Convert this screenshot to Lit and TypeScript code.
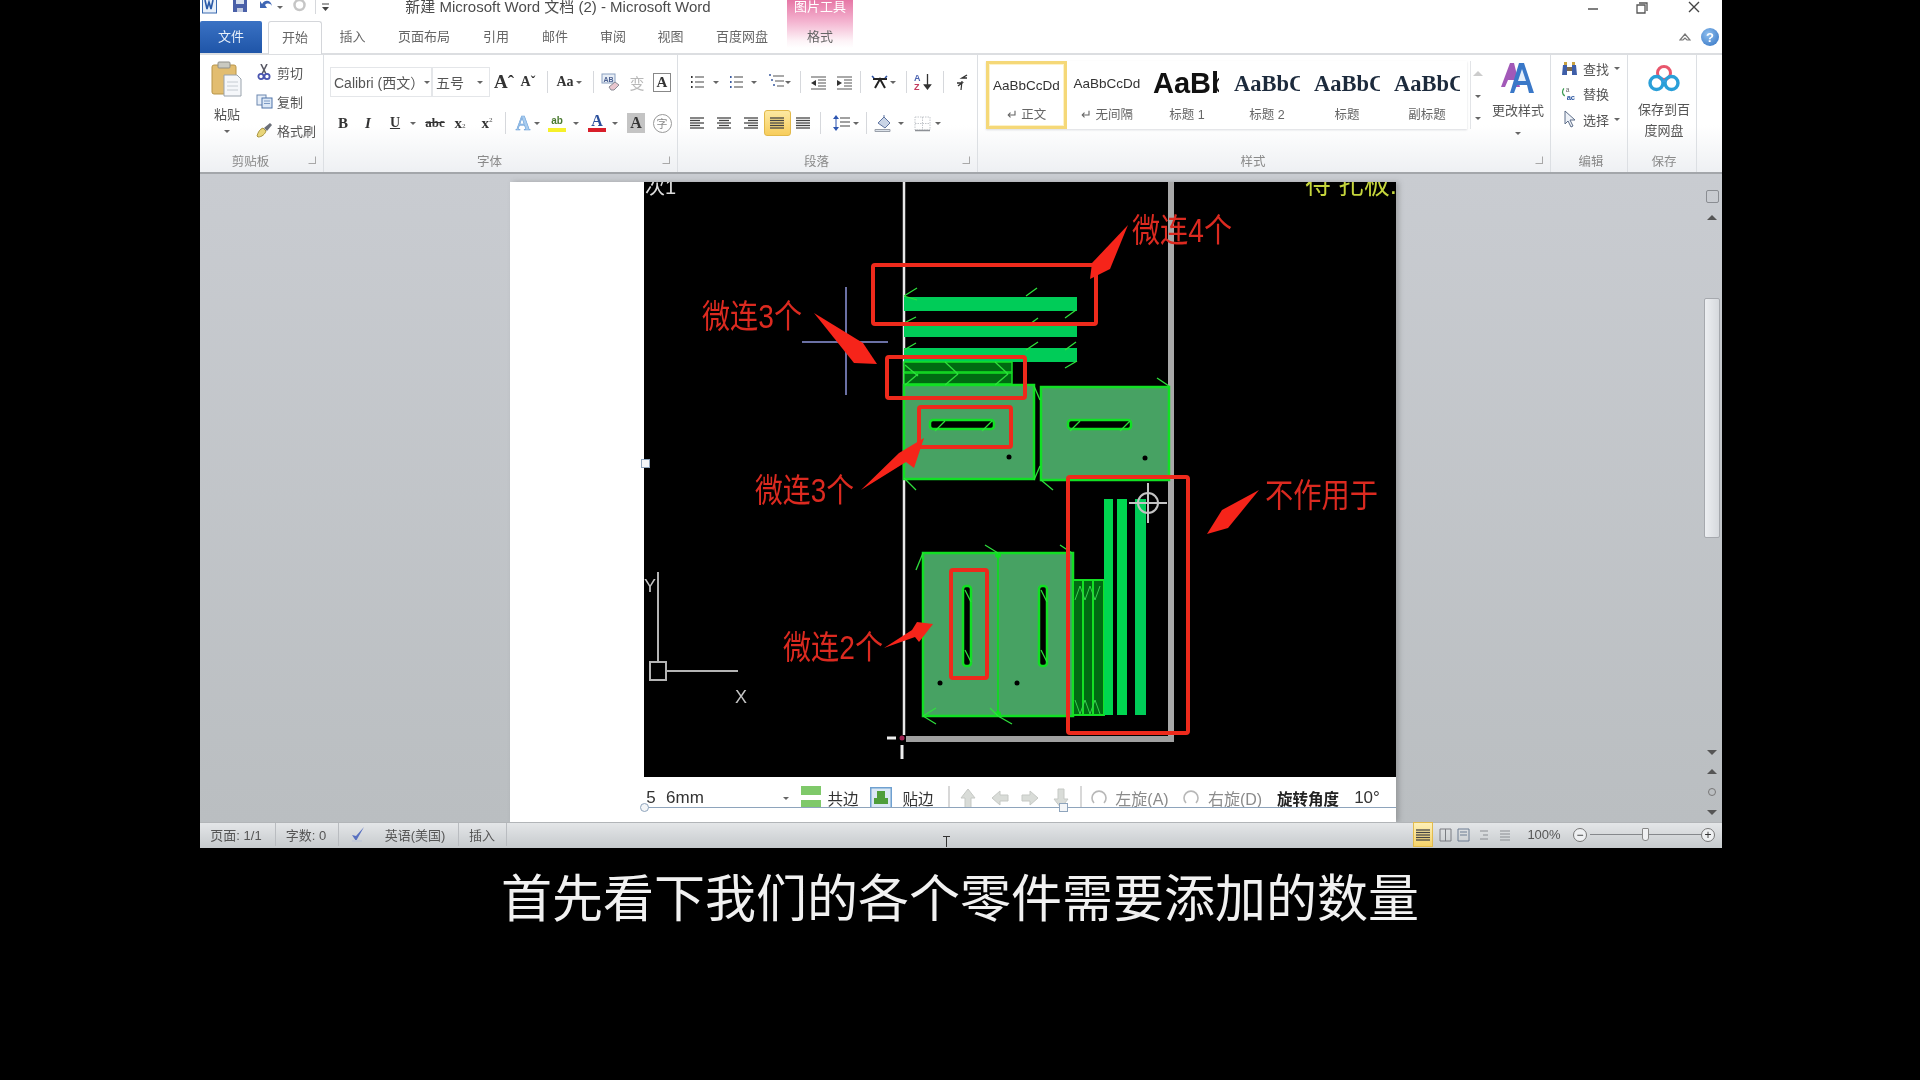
import { LitElement, html, css, svg, TemplateResult } from "lit";
import { customElement } from "lit/decorators.js";

type Cell = [number, TemplateResult | string, number?];

// place fixed-width cells so each one is centred on its x, from a row starting at origin
const row = (origin: number, items: Cell[]) => {
  let prev = origin;
  return items.map(([c, content, w = 20]) => {
    const ml = c - w / 2 - prev;
    prev = c + w / 2;
    return html`<span class="cell" style="margin-left:${ml}px;width:${w}px">${content}</span>`;
  });
};

const arr = html`<i class="arr"></i>`;
const sep = html`<i class="sep"></i>`;

const lines = (kind: string) => {
  const rows: Record<string, number[][]> = {
    left: [[1, 15], [1, 11], [1, 15], [1, 11], [1, 15]],
    center: [[1, 15], [3, 13], [1, 15], [3, 13], [1, 15]],
    right: [[1, 15], [5, 15], [1, 15], [5, 15], [1, 15]],
    just: [[1, 15], [1, 15], [1, 15], [1, 15], [1, 15]],
  };
  return html`<svg width="16" height="14" viewBox="0 0 16 14">
    ${rows[kind].map(
      ([a, b], i) => svg`<path d="M${a} ${2 + i * 2.5}H${b}" stroke="#444" stroke-width="1.3" />`
    )}
  </svg>`;
};

const bullets = (color = "#333") => html`<svg width="16" height="16" viewBox="0 0 16 16">
  <path d="M6 3H15M6 8H15M6 13H15" stroke="#444" stroke-width="1.2" />
  <path d="M2 3h1.6M2 8h1.6M2 13h1.6" stroke=${color} stroke-width="2" />
</svg>`;

const icons = {
  paste: html`<svg width="32" height="36" viewBox="0 0 32 36">
    <rect x="1" y="4" width="24" height="29" rx="2" fill="#e2bd70" stroke="#b89548" />
    <rect x="7" y="1" width="12" height="6" rx="1" fill="#c9c9c0" stroke="#8f8f88" />
    <path d="M13 14h13l4 4v17H13z" fill="#f5f7fa" stroke="#9aa3ad" />
    <path d="M16 21h11M16 25h11M16 29h11" stroke="#c6ccd2" />
  </svg>`,
  cut: html`<svg width="14" height="16" viewBox="0 0 14 16">
    <path d="M4 0l5 10M10 0L5 10" stroke="#5a5a66" stroke-width="1.6" />
    <circle cx="4" cy="12.5" r="2.6" fill="none" stroke="#4a55b0" stroke-width="1.8" />
    <circle cx="10" cy="12.5" r="2.6" fill="none" stroke="#4a55b0" stroke-width="1.8" />
  </svg>`,
  copy: html`<svg width="17" height="15" viewBox="0 0 17 15">
    <rect x="1" y="1" width="9" height="10" fill="#e6eef8" stroke="#6d88b0" />
    <rect x="6" y="4" width="10" height="10" fill="#dce8f6" stroke="#4e73a8" />
    <path d="M8 7h6M8 9.5h6" stroke="#7c9ac4" />
  </svg>`,
  brush: html`<svg width="18" height="17" viewBox="0 0 18 17">
    <path d="M2 14c1-4 3-7 6-8l3 3c-1 3-4 6-8 6z" fill="#e8d57a" stroke="#a89540" />
    <path d="M9 6l6-5 2 2-5 6z" fill="#6b6f78" />
  </svg>`,
  clear: html`<svg width="20" height="18" viewBox="0 0 20 18">
    <rect x="2" y="1" width="13" height="9" fill="#e8eef6" stroke="#8aa0c0" />
    <text x="3.5" y="8.5" font-size="7" font-weight="700" fill="#4a5f90" font-family="Liberation Sans">AB</text>
    <path d="M9 14l6-5 4 3-5 5H11z" fill="#e9c7cf" stroke="#8a8a94" />
  </svg>`,
  sort: html`<svg width="20" height="18" viewBox="0 0 20 18">
    <text x="1" y="8" font-size="9" font-weight="700" fill="#4a62b0" font-family="Liberation Sans">A</text>
    <text x="1" y="17" font-size="9" font-weight="700" fill="#c23a5e" font-family="Liberation Sans">Z</text>
    <path d="M14.5 1v14M11.5 12l3 4 3-4z" stroke="#333" fill="#333" stroke-width="1.3" />
  </svg>`,
  pilcrow: html`<svg width="16" height="18" viewBox="0 0 16 18">
    <path d="M13 2L8 5h5M3 10h5L4 13" fill="none" stroke="#333" stroke-width="1.4" />
    <path d="M8 8l-1 9" stroke="#333" stroke-width="1.2" />
  </svg>`,
  indentL: html`<svg width="17" height="15" viewBox="0 0 17 15">
    <path d="M1 2h15M8 5h8M8 8h8M8 11h8M1 14h15" stroke="#555" stroke-width="1.2" />
    <path d="M6 5v6L1 8z" fill="#333" />
  </svg>`,
  indentR: html`<svg width="17" height="15" viewBox="0 0 17 15">
    <path d="M1 2h15M8 5h8M8 8h8M8 11h8M1 14h15" stroke="#555" stroke-width="1.2" />
    <path d="M1 5v6l5-3z" fill="#333" />
  </svg>`,
  asian: html`<svg width="18" height="14" viewBox="0 0 18 14">
    <path d="M4 13L9 4l5 9M2 4h14" fill="none" stroke="#222" stroke-width="2" />
    <path d="M1 1l2 2M16 1l-2 2" stroke="#2a4fa0" stroke-width="1.6" />
  </svg>`,
  multi: html`<svg width="18" height="18" viewBox="0 0 18 18">
    <path d="M5 3h11M7 8h9M9 13h7" stroke="#555" stroke-width="1.2" />
    <path d="M1 2h2M3 7h2M5 12h2" stroke="#3a5aa0" stroke-width="1.6" />
  </svg>`,
  lineSp: html`<svg width="18" height="18" viewBox="0 0 18 18">
    <path d="M7 4h10M7 8h10M7 12h10" stroke="#444" stroke-width="1.2" />
    <path d="M3 1l3 4H0zM3 17l3-4H0z" fill="#2c55b0" />
    <path d="M3 5v8" stroke="#2c55b0" />
  </svg>`,
  bucket: html`<svg width="20" height="19" viewBox="0 0 20 19">
    <path d="M4 9l6-6 6 6-5 5z" fill="#c9d4e6" stroke="#5f74a0" />
    <path d="M10 3V1" stroke="#5f74a0" />
    <path d="M1 15.5h15v2H1z" fill="#dce2ea" stroke="#9aa0aa" />
  </svg>`,
  border: html`<svg width="17" height="17" viewBox="0 0 17 17">
    <path d="M1 2h15v13H1zM8.5 2v13M1 8.5h15" fill="none" stroke="#c3c6cb" stroke-dasharray="1.5 1" />
    <path d="M1 15.5h15" stroke="#8d9096" stroke-width="1.5" />
  </svg>`,
  find: html`<svg width="17" height="15" viewBox="0 0 17 15">
    <path d="M2 4h4v10H1zM11 4h4l1 10h-5z" fill="#3e5ea8" />
    <path d="M6 6h5v4H6z" fill="#7e6b4c" />
    <path d="M3 1h3v3H3zM11 1h3v3h-3z" fill="#c9a240" />
  </svg>`,
  replace: html`<svg width="18" height="17" viewBox="0 0 18 17">
    <path d="M3 3c-2 3-2 6 1 8" fill="none" stroke="#3a9a50" stroke-width="1.4" />
    <text x="5" y="7" font-size="7" fill="#666" font-family="Liberation Sans">a</text>
    <text x="6" y="15" font-size="8" font-weight="700" fill="#2a55a0" font-family="Liberation Sans">ac</text>
  </svg>`,
  select: html`<svg width="14" height="18" viewBox="0 0 14 18">
    <path d="M2 1v13l3-3 3 6 2-1-3-6h5z" fill="#eef2f8" stroke="#5d6d88" />
  </svg>`,
  change: html`<svg width="36" height="34" viewBox="0 0 36 34">
    <path d="M1 26L10 2h4l6 24h-4l-2-7H8l-3 7z" fill="#a259b8" />
    <path d="M10 32L19 2h5l10 30h-5l-2-8H17l-3 8z" fill="#3a78c8" />
    <path d="M18 20h8l-4-12z" fill="#e4eefa" />
  </svg>`,
  baidu: html`<svg width="32" height="28" viewBox="0 0 32 28">
    <circle cx="16" cy="9" r="6.5" fill="none" stroke="#e8566c" stroke-width="3" />
    <circle cx="8.5" cy="19" r="6.5" fill="none" stroke="#2a9fd8" stroke-width="3.4" />
    <circle cx="23.5" cy="19" r="6.5" fill="none" stroke="#2a9fd8" stroke-width="3.4" />
    <path d="M16 15l-3 3h6z" fill="#3aa0e0" />
  </svg>`,
  check: html`<svg width="18" height="18" viewBox="0 0 18 18">
    <path d="M3 9l4 6 8-14-8 9z" fill="#5870c0" />
    <path d="M3 15h10" stroke="#c4cad6" stroke-width="2" />
  </svg>`,
};

@customElement("cad-figure")
export class CadFigure extends LitElement {
  static styles = css`
    :host {
      display: block;
    }
    svg {
      display: block;
    }
    text {
      font-family: "Liberation Sans", "Noto Sans CJK SC", sans-serif;
    }
  `;

  private ticks = [
    [904, 296, 917, 288], [904, 296, 917, 300], [1026, 296, 1037, 288], [1065, 318, 1076, 310],
    [904, 323, 916, 317], [1030, 324, 1038, 318], [904, 350, 916, 343], [1026, 350, 1038, 342],
    [1065, 350, 1076, 342], [1065, 368, 1077, 361], [905, 365, 918, 376], [945, 362, 958, 374],
    [995, 362, 1008, 374], [905, 385, 918, 374], [945, 385, 958, 374], [995, 385, 1008, 374],
    [1034, 386, 1040, 400], [1157, 378, 1169, 386], [1034, 480, 1040, 466], [1041, 480, 1053, 490],
    [904, 478, 916, 490], [935, 431, 945, 421], [982, 431, 992, 421], [1070, 431, 1080, 421],
    [1120, 431, 1130, 421], [923, 553, 916, 570], [985, 545, 998, 553], [1060, 545, 1072, 553],
    [923, 716, 936, 708], [923, 716, 936, 724], [998, 716, 1012, 724], [998, 716, 990, 708],
    [965, 590, 971, 602], [965, 650, 971, 662], [1041, 590, 1047, 602], [1041, 650, 1047, 662],
  ];

  private redBox(x: number, y: number, w: number, h: number) {
    return svg`<rect x=${x} y=${y} width=${w} height=${h} rx="2" fill="none" stroke="#ee2a1c" stroke-width="4" />`;
  }

  private label(s: string, x: number, y: number, len: number) {
    return svg`<text x=${x} y=${y} font-size="33" fill="#dc2a20" textLength=${len} lengthAdjust="spacingAndGlyphs">${s}</text>`;
  }

  private plate(x: number, y: number, w: number, h: number) {
    return svg`<rect x=${x} y=${y} width=${w} height=${h} fill="#47a263" stroke="#12e024" stroke-width="2.5" />`;
  }

  private slot(x: number, y: number, w: number, h: number) {
    return svg`<rect x=${x} y=${y} width=${w} height=${h} rx="3" fill="#000" stroke="#12e024" stroke-width="2.5" />`;
  }

  render() {
    return html`<svg width="752" height="595" viewBox="644 182 752 595">
      <rect x="644" y="182" width="752" height="595" fill="#000" />

      <text x="645" y="194" font-size="20" fill="#dcdcdc">次1</text>
      <text x="1305" y="194" font-size="27" fill="#c6d63c" textLength="92" lengthAdjust="spacingAndGlyphs">待 扎板:</text>

      <!-- sheet edges -->
      <path d="M904 182V735" stroke="#e8e8e8" stroke-width="2.5" />
      <path d="M1171 182V742" stroke="#a8a8a8" stroke-width="6" />
      <path d="M906 739H1174" stroke="#a0a0a0" stroke-width="6" />

      <!-- cursor crosshair -->
      <path d="M846 287V395M802 342H888" stroke="#6a70a4" stroke-width="2" />

      <!-- strip parts -->
      <rect x="904" y="297" width="173" height="14" fill="#00cc58" />
      <rect x="904" y="325" width="173" height="12" fill="#00cc58" />
      <rect x="904" y="348" width="173" height="14" fill="#00cc58" />
      <rect x="904" y="362" width="108" height="10" fill="#006b12" stroke="#14e024" stroke-width="1.5" />
      <rect x="904" y="373" width="108" height="11" fill="#006b12" stroke="#14e024" stroke-width="1.5" />

      ${this.plate(904, 385, 130, 94)}
      ${this.plate(1041, 387, 128, 93)}
      ${this.slot(930, 420, 64, 9)}
      ${this.slot(1068, 420, 63, 9)}
      <circle cx="1009" cy="457" r="2.5" fill="#000" />
      <circle cx="1145" cy="458" r="2.5" fill="#000" />

      ${this.plate(923, 553, 150, 163)}
      <path d="M998 553V716" stroke="#16d42a" stroke-width="2" />
      <circle cx="998" cy="555" r="3" fill="#12e024" />
      <circle cx="998" cy="714" r="3" fill="#12e024" />
      ${this.slot(963, 586, 8, 80)}
      ${this.slot(1039, 586, 8, 80)}
      <circle cx="940" cy="683" r="2.5" fill="#000" />
      <circle cx="1017" cy="683" r="2.5" fill="#000" />

      <!-- upright strips -->
      <rect x="1073" y="580" width="31" height="135" fill="#006b12" stroke="#14e024" stroke-width="2" />
      <path d="M1083 580V715M1093 580V715" stroke="#14e024" stroke-width="2" />
      <path d="M1075 600l5-14 5 14 5-14 5 14 5-14M1075 700l5 14 5-14 5 14 5-14 5 14" fill="none" stroke="#38d050" />
      <rect x="1104" y="499" width="9" height="216" fill="#00d650" />
      <rect x="1117" y="499" width="10" height="216" fill="#00d650" />
      <rect x="1135" y="499" width="11" height="216" fill="#00cc58" />

      <g stroke="#2ee03c" stroke-width="1.3">
        ${this.ticks.map(([a, b, c, d]) => svg`<line x1=${a} y1=${b} x2=${c} y2=${d} />`)}
      </g>

      <!-- red markup -->
      ${this.redBox(873, 265, 223, 59)}
      ${this.redBox(887, 357, 138, 41)}
      ${this.redBox(919, 407, 92, 40)}
      ${this.redBox(951, 570, 36, 108)}
      ${this.redBox(1068, 477, 120, 256)}
      <g fill="#f6241a">
        <polygon points="1128,225 1110,269 1090,279 1092,263" />
        <polygon points="814,313 863,343 877,364 854,363" />
        <polygon points="861,490 899,453 924,438 914,468 906,462" />
        <polygon points="1259,490 1228,528 1207,534 1222,510" />
        <polygon points="884,648 912,630 917,622 933,624 919,642 915,637" />
      </g>
      ${this.label("微连4个", 1132, 242, 100)}
      ${this.label("微连3个", 702, 328, 100)}
      ${this.label("微连3个", 755, 502, 99)}
      ${this.label("微连2个", 783, 659, 100)}
      ${this.label("不作用于", 1265, 507, 113)}

      <!-- ucs icon -->
      <path d="M658 572V662M666 671H738" stroke="#b4b4b4" stroke-width="2" />
      <rect x="650" y="662" width="16" height="18" fill="none" stroke="#b4b4b4" stroke-width="2" />
      <text x="644" y="592" font-size="18" fill="#c4c4c4">Y</text>
      <text x="735" y="703" font-size="18" fill="#c4c4c4">X</text>

      <!-- snap target -->
      <g stroke="#c4c4c4" fill="none" stroke-width="2">
        <circle cx="1148" cy="503" r="10" />
        <path d="M1148 483V523M1129 503H1167" />
      </g>

      <!-- origin marker -->
      <path d="M887 738H896M902 745V759" stroke="#eee" stroke-width="3" />
      <circle cx="902" cy="738" r="2.5" fill="#a02050" />
    </svg>`;
  }
}

@customElement("app-root")
export class AppRoot extends LitElement {
  static styles = css`
    :host {
      display: block;
      width: 1920px;
      height: 1080px;
      background: #000;
      overflow: hidden;
      font-family: "Liberation Sans", "Noto Sans CJK SC", sans-serif;
    }

    .window {
      width: 1522px;
      height: 848px;
      margin-left: 200px;
      display: flex;
      flex-direction: column;
      background: #fff;
      overflow: hidden;
      filter: blur(0.6px);
      color: #555;
      font-size: 13px;
    }

    .cell {
      display: inline-flex;
      align-items: center;
      justify-content: center;
      flex: none;
      height: 100%;
      white-space: nowrap;
    }

    .arr {
      width: 0;
      height: 0;
      border-left: 3px solid transparent;
      border-right: 3px solid transparent;
      border-top: 3px solid #666;
    }

    .sep {
      width: 1px;
      height: 22px;
      background: #d6d8dc;
    }

    /* title bar */
    .title {
      height: 21px;
      display: flex;
      position: relative;
      flex: none;
    }

    .title .cell {
      height: 14px;
    }

    .title-text {
      font-size: 15px;
      color: #4c4c4c;
      line-height: 12px;
    }

    .tool-tab {
      position: absolute;
      left: 587px;
      top: 0;
      width: 66px;
      height: 48px;
      background: linear-gradient(#e677a6, #f4b4d0 45%, #fdf3f7 85%, #fff);
      color: #fff;
      text-align: center;
      font-size: 13px;
      line-height: 14px;
    }

    .win-btns {
      display: flex;
      height: 14px;
      position: absolute;
      left: 0;
      top: 0;
      right: 0;
    }

    /* tabs */
    .tabs {
      height: 32px;
      display: flex;
      flex: none;
      position: relative;
      align-items: stretch;
    }

    .tab {
      display: flex;
      align-items: center;
      justify-content: center;
      flex: none;
      color: #666;
      font-size: 13px;
      position: relative;
      padding-bottom: 3px;
      box-sizing: border-box;
    }

    .tab.file {
      background: linear-gradient(#3a72c4, #1f55a8);
      color: #e8f0fa;
      border-radius: 2px 2px 0 0;
      margin-right: 6px;
    }

    .tab.active {
      border: 1px solid #d4d6da;
      border-bottom: 0;
      border-radius: 3px 3px 0 0;
      background: #fff;
      margin-bottom: -1px;
    }

    .tab-right {
      position: absolute;
      right: 0;
      top: 0;
      bottom: 0;
      left: 0;
      display: flex;
      align-items: center;
      pointer-events: none;
    }

    .help {
      width: 18px;
      height: 18px;
      border-radius: 50%;
      background: radial-gradient(circle at 40% 35%, #8fc0f0, #2f6fc0);
      color: #fff;
      font-weight: 700;
      font-size: 13px;
      display: flex;
      align-items: center;
      justify-content: center;
    }

    /* ribbon */
    .ribbon {
      height: 121px;
      flex: none;
      display: flex;
      border-top: 2px solid #dcdee1;
      border-bottom: 2px solid #a3a6aa;
      background: linear-gradient(#fff 60%, #eef0f3);
      box-sizing: border-box;
    }

    .group {
      display: flex;
      flex-direction: column;
      flex: none;
      border-right: 1px solid #dcdfe3;
      box-sizing: border-box;
    }

    .g-clip { width: 124px; }
    .g-font { width: 354px; }
    .g-para { width: 300px; }
    .g-style { width: 573px; }
    .g-edit { width: 77px; }
    .g-save { width: 69px; }

    .g-body {
      flex: 1;
      min-height: 0;
    }

    .g-foot {
      height: 24px;
      flex: none;
      display: flex;
      align-items: center;
      color: #8a8a8a;
      font-size: 12.5px;
    }

    .g-edit .g-foot,
    .g-save .g-foot {
      padding-left: 4px;
    }

    .g-foot span {
      flex: 1;
      text-align: center;
    }

    .ext {
      width: 22px;
      display: flex;
      justify-content: center;
    }

    .ext b {
      width: 6px;
      height: 6px;
      border: 1px solid #a8a8a8;
      border-top-color: transparent;
      border-left-color: transparent;
    }

    .clip-body {
      display: flex;
    }

    .paste {
      width: 54px;
      padding-top: 6px;
      display: flex;
      flex-direction: column;
      align-items: center;
      gap: 7px;
      flex: none;
    }

    .clip-rows {
      padding-top: 5px;
      display: flex;
      flex-direction: column;
      gap: 5px;
    }

    .clip-row {
      display: flex;
      align-items: center;
      height: 24px;
      gap: 3px;
    }

    .clip-row .ico {
      width: 20px;
      display: flex;
      justify-content: center;
    }

    .tool-rows {
      padding-top: 12px;
      display: flex;
      flex-direction: column;
      gap: 13px;
    }

    .tool-row {
      display: flex;
      height: 30px;
      color: #333;
    }

    .tool-row.low {
      height: 26px;
    }

    .combo {
      border: 1px solid #e4e6e9;
      box-sizing: border-box;
      width: 100%;
      height: 100%;
      display: flex;
      align-items: center;
      justify-content: space-between;
      padding: 0 6px 0 3px;
      font-size: 14px;
      color: #555;
    }

    .serif {
      font-family: "Liberation Serif", "Noto Sans CJK SC", serif;
      font-weight: 700;
      color: #333;
    }

    .big { font-size: 19px; }
    .mid { font-size: 14px; }

    .boxed {
      border: 1px solid #888;
      padding: 0 3px;
      font-size: 15px;
      line-height: 17px;
    }

    .strike { text-decoration: line-through; }
    .under { text-decoration: underline; }
    .ital { font-style: italic; }

    .script {
      font-size: 7px;
      color: #777;
    }

    .a-glow {
      color: #a9cdf0;
      -webkit-text-stroke: 0.6px #6fa2d8;
      font-size: 20px;
    }

    .a-mark {
      display: inline-flex;
      flex-direction: column;
      align-items: center;
      line-height: 14px;
    }

    .a-mark i {
      width: 18px;
      height: 4px;
    }

    .shade {
      background: #c4c4c4;
      padding: 0 3px;
      font-size: 16px;
      line-height: 20px;
    }

    .circled {
      width: 17px;
      height: 17px;
      border: 1px solid #999;
      border-radius: 50%;
      font-size: 11px;
      color: #888;
      display: flex;
      align-items: center;
      justify-content: center;
    }

    .hl {
      width: 27px;
      height: 26px;
      background: linear-gradient(#fde9a2, #f7cd5c);
      border: 1px solid #e2b94a;
      border-radius: 3px;
      box-sizing: border-box;
      display: flex;
      align-items: center;
      justify-content: center;
    }

    .style-body {
      display: flex;
    }

    .gallery {
      margin: 6px 0 0 8px;
      height: 68px;
      display: flex;
      background: #fff;
      box-shadow: 0 1px 2px #d9dbdf;
      flex: none;
    }

    .sty {
      width: 80px;
      height: 68px;
      box-sizing: border-box;
      display: flex;
      flex-direction: column;
      align-items: center;
      overflow: hidden;
      color: #666;
      flex: none;
    }

    .sty.on {
      width: 81px;
      border: 3px solid #f5d878;
      box-shadow: inset 0 0 0 1px #fdf2c8;
    }

    .sty .pv {
      height: 43px;
      display: flex;
      align-items: center;
      justify-content: center;
      width: 72px;
      overflow: hidden;
      white-space: nowrap;
      color: #333;
      font-size: 13.5px;
      box-sizing: border-box;
      padding-top: 2px;
    }

    .sty.on .pv {
      height: 40px;
    }

    .sty .pv.h1 {
      justify-content: flex-start;
      align-self: flex-start;
      margin-left: 6px;
      width: 66px;
      font-size: 29px;
      font-weight: 700;
      color: #111;
    }

    .sty .pv.h2 {
      justify-content: flex-start;
      align-self: flex-start;
      margin-left: 7px;
      width: 66px;
      font-family: "Liberation Serif", serif;
      font-size: 22.5px;
      font-weight: 700;
      color: #1c2a3c;
    }

    .sty .nm {
      font-size: 12.5px;
    }

    .g-scroll {
      width: 15px;
      height: 68px;
      margin: 6px 0 0 3px;
      border-left: 1px solid #e2e4e7;
      display: flex;
      flex-direction: column;
      align-items: center;
      justify-content: space-around;
      box-sizing: border-box;
      flex: none;
    }

    .change {
      width: 66px;
      flex: none;
      display: flex;
      flex-direction: column;
      align-items: center;
      padding-top: 6px;
      gap: 5px;
      color: #555;
    }

    .change .arr {
      margin-top: 8px;
    }

    .edit-rows {
      padding: 1px 0 0 10px;
      display: flex;
      flex-direction: column;
      gap: 1.5px;
    }

    .edit-row {
      display: flex;
      align-items: center;
      height: 24px;
      gap: 5px;
    }

    .edit-row .ico {
      width: 17px;
      display: flex;
      justify-content: center;
    }

    .save-body {
      display: flex;
      flex-direction: column;
      align-items: center;
      padding: 9px 0 0 4px;
      line-height: 21px;
      text-align: center;
      color: #555;
    }

    .save-body svg {
      margin-bottom: 7px;
    }

    /* document */
    .doc {
      flex: 1;
      min-height: 0;
      display: flex;
      padding-top: 8px;
      overflow: hidden;
      background: linear-gradient(#c9ccd1, #babec1);
    }

    .page {
      margin-left: 310px;
      width: 886px;
      height: 640px;
      display: flex;
      background: #fff;
      box-shadow: 3px 0 5px rgba(90, 90, 90, 0.35);
      flex: none;
    }

    .page-margin {
      width: 134px;
      flex: none;
    }

    .pic {
      width: 752px;
      position: relative;
      flex: none;
    }

    .cad-tools {
      height: 31px;
      display: flex;
      border-bottom: 1px solid #8ea4bc;
      box-sizing: border-box;
      overflow: hidden;
      color: #333;
      font-size: 17px;
      align-items: stretch;
    }

    .cad-tools .cell {
      padding-top: 12px;
      box-sizing: border-box;
    }

    .off {
      color: #8b8b8b;
    }

    .strong {
      font-weight: 700;
      color: #222;
    }

    .vsep {
      width: 2px;
      height: 24px;
      background: #d8d8d8;
    }

    .handle {
      position: absolute;
      top: 621px;
      width: 7px;
      height: 7px;
      background: #f4f6f8;
      border: 1px solid #8ea4bc;
    }

    .handle.round {
      border-radius: 50%;
      left: -4px;
    }

    .handle.mid {
      left: 415px;
    }

    .handle.side {
      left: -3px;
      top: 277px;
    }

    .v-scroll {
      width: 18px;
      margin: 0 1px 0 auto;
      display: flex;
      flex-direction: column;
      align-items: center;
      flex: none;
      color: #666;
      padding-top: 2px;
    }

    .thumb {
      width: 16px;
      height: 240px;
      margin-top: 78px;
      background: linear-gradient(90deg, #eceef1, #d6d9dd);
      border: 1px solid #a6a9ae;
      border-radius: 2px;
      box-sizing: border-box;
      flex: none;
    }

    .up {
      width: 0;
      height: 0;
      border-left: 5px solid transparent;
      border-right: 5px solid transparent;
      border-bottom: 5px solid #555;
    }

    .down {
      width: 0;
      height: 0;
      border-left: 5px solid transparent;
      border-right: 5px solid transparent;
      border-top: 5px solid #555;
    }

    .ruler {
      width: 13px;
      height: 13px;
      border: 1px solid #8a8d92;
      border-radius: 2px;
      box-sizing: border-box;
      margin-bottom: 12px;
      margin-top: 6px;
    }

    .v-scroll .s-down {
      margin-top: 212px;
    }

    .v-scroll .s-next {
      margin-top: 14px;
    }

    .dot {
      width: 8px;
      height: 8px;
      border: 1px solid #777;
      border-radius: 50%;
      box-sizing: border-box;
    }

    /* status bar */
    .status {
      height: 26px;
      flex: none;
      display: flex;
      border-top: 1px solid #b2b5b8;
      background: linear-gradient(#e4e6e8, #c6cacd);
      box-sizing: border-box;
      color: #555;
      font-size: 13px;
      position: relative;
      padding-bottom: 2px;
    }

    .status .sep {
      height: 100%;
      background: #b9bcc0;
    }

    .view-on {
      width: 20px;
      height: 25px;
      background: linear-gradient(#fdf0b8, #f6d36a);
      border: 1px solid #e2bb4c;
      box-sizing: border-box;
      display: flex;
      align-items: center;
      justify-content: center;
    }

    .zbtn {
      width: 14px;
      height: 14px;
      border: 1px solid #777;
      border-radius: 50%;
      box-sizing: border-box;
      background: #eef0f2;
      display: flex;
      align-items: center;
      justify-content: center;
      line-height: 10px;
      font-size: 12px;
      color: #333;
    }

    .zline {
      width: 111px;
      height: 1px;
      background: #85888c;
      display: flex;
      align-items: center;
      justify-content: center;
    }

    .zline b {
      width: 7px;
      height: 13px;
      background: #f0f1f3;
      border: 1px solid #888;
      box-sizing: border-box;
      border-radius: 1px 1px 3px 3px;
    }

    .ibeam {
      width: 7px;
      height: 11px;
      margin-top: 14px;
      border-top: 1px solid #333;
      display: flex;
      justify-content: center;
      box-sizing: border-box;
    }

    .ibeam::after {
      content: "";
      width: 1px;
      background: #333;
    }

    .subtitle {
      height: 232px;
      padding-top: 18px;
      box-sizing: border-box;
      text-align: center;
      color: #f1f1f1;
      font-family: "Noto Sans CJK SC", sans-serif;
      font-size: 51px;
      line-height: 58px;
    }
  `;

  private tabs = [
    { t: "开始", w: 53 + 1, cls: "active" },
    { t: "插入", w: 61 },
    { t: "页面布局", w: 82 },
    { t: "引用", w: 62 },
    { t: "邮件", w: 56 },
    { t: "审阅", w: 60 },
    { t: "视图", w: 55 },
    { t: "百度网盘", w: 88 },
    { t: "", w: 1 },
    { t: "格式", w: 66 },
  ];

  private styles_ = [
    { pv: "AaBbCcDd", nm: "↵ 正文", cls: "on", k: "" },
    { pv: "AaBbCcDd", nm: "↵ 无间隔", cls: "", k: "" },
    { pv: "AaBbC", nm: "标题 1", cls: "", k: "h1" },
    { pv: "AaBbCc", nm: "标题 2", cls: "", k: "h2" },
    { pv: "AaBbCc", nm: "标题", cls: "", k: "h2" },
    { pv: "AaBbCc", nm: "副标题", cls: "", k: "h2" },
  ];

  private group(cls: string, label: string, ext: boolean, body: TemplateResult) {
    return html`<div class="group ${cls}">
      <div class="g-body">${body}</div>
      <div class="g-foot">
        <span>${label}</span>
        ${ext ? html`<div class="ext"><b></b></div>` : ""}
      </div>
    </div>`;
  }

  private titleBar() {
    return html`<div class="title">
      ${row(0, [
        [9, html`<svg width="15" height="14" viewBox="0 0 15 14">
            <rect x=".5" y="-3" width="14" height="16" fill="#e8f0fa" stroke="#3a6ab0" />
            <path d="M3 0l2 9 2-7 2 7 2-9" fill="none" stroke="#2a5aa8" stroke-width="1.6" />
          </svg>`],
        [40, html`<svg width="14" height="14" viewBox="0 0 14 14">
            <path d="M0-2h14v14H0z" fill="#4a60a8" />
            <path d="M3-2h8v6H3z" fill="#d8e0ee" />
            <path d="M4 8h6v4H4z" fill="#c4cce0" />
          </svg>`],
        [66, html`<svg width="15" height="14" viewBox="0 0 15 14">
            <path d="M3 4c3-5 9-4 10 2-2-3-5-3-7-1l2 3H1V1z" fill="#3f66b4" />
          </svg>`],
        [80, arr, 8],
        [99, html`<svg width="13" height="14" viewBox="0 0 13 14">
            <circle cx="6.5" cy="5" r="5" fill="none" stroke="#c6c6c6" stroke-width="2.5" />
          </svg>`],
        [115, html`<i class="sep" style="height:14px"></i>`, 2],
        [125, html`<svg width="9" height="10" viewBox="0 0 9 10">
            <path d="M1 2h7" stroke="#444" />
            <path d="M1 5h7L4.500 9z" fill="#444" />
          </svg>`],
        [358, html`<span class="title-text">新建 Microsoft Word 文档 (2) - Microsoft Word</span>`, 310],
      ])}
      <div class="tool-tab">图片工具</div>
      <div class="win-btns">
        ${row(0, [
          [1393, html`<svg width="12" height="14"><path d="M1 9h10" stroke="#555" stroke-width="1.5" /></svg>`],
          [1442, html`<svg width="12" height="14" viewBox="0 0 12 14">
              <path d="M3 3h8v8M1 5h8v8H1z" fill="none" stroke="#555" stroke-width="1.3" />
            </svg>`],
          [1494, html`<svg width="12" height="14" viewBox="0 0 12 14">
              <path d="M1 2l10 10M11 2L1 12" stroke="#444" stroke-width="1.4" />
            </svg>`],
        ])}
      </div>
    </div>`;
  }

  private tabBar() {
    return html`<div class="tabs">
      <div class="tab file" style="width:62px">文件</div>
      ${this.tabs.map(
        (t) => html`<div class="tab ${t.cls ?? ""}" style="width:${t.w}px">${t.t}</div>`
      )}
      <div class="tab-right">
        ${row(0, [
          [1485, html`<svg width="12" height="10" viewBox="0 0 12 10">
              <path d="M1 8l5-6 5 6-3 0-2-2-2 2z" fill="none" stroke="#777" stroke-width="1.2" />
            </svg>`],
          [1510, html`<span class="help">?</span>`],
        ])}
      </div>
    </div>`;
  }

  private clipboard() {
    return this.group(
      "g-clip",
      "剪贴板",
      true,
      html`<div class="clip-body">
        <div class="paste">${icons.paste}<span>粘贴</span>${arr}</div>
        <div class="clip-rows">
          <div class="clip-row"><span class="ico">${icons.cut}</span>剪切</div>
          <div class="clip-row"><span class="ico">${icons.copy}</span>复制</div>
          <div class="clip-row"><span class="ico">${icons.brush}</span>格式刷</div>
        </div>
      </div>`
    );
  }

  private fontGroup() {
    return this.group(
      "g-font",
      "字体",
      true,
      html`<div class="tool-rows">
        <div class="tool-row">
          ${row(324, [
            [381, html`<span class="combo">Calibri (西文）${arr}</span>`, 102],
            [461, html`<span class="combo">五号${arr}</span>`, 58],
            [504, html`<span class="serif big">Aˆ</span>`],
            [528, html`<span class="serif mid">Aˇ</span>`],
            [547, sep, 2],
            [565, html`<span class="serif mid">Aa</span>`],
            [579, arr, 8],
            [593, sep, 2],
            [610, icons.clear],
            [637, html`<span style="color:#b8b8b8;font-size:15px">变</span>`],
            [662, html`<span class="serif boxed">A</span>`],
          ])}
        </div>
        <div class="tool-row low">
          ${row(324, [
            [343, html`<span class="serif big" style="font-size:15px">B</span>`],
            [368, html`<span class="serif ital" style="font-size:15px">I</span>`],
            [395, html`<span class="serif under" style="font-size:14px">U</span>`],
            [413, arr, 8],
            [435, html`<span class="serif strike">abc</span>`],
            [460, html`<span class="serif" style="font-size:15px">x<span class="script">2</span></span>`],
            [487, html`<span class="serif" style="font-size:15px">x<span class="script" style="vertical-align:6px">2</span></span>`],
            [505, sep, 2],
            [523, html`<span class="serif a-glow">A</span>`],
            [537, arr, 8],
            [557, html`<span class="a-mark">
                <span style="font-size:10px;color:#4a7a30;font-weight:700">ab</span>
                <i style="background:#f6f02a"></i>
              </span>`],
            [576, arr, 8],
            [597, html`<span class="a-mark">
                <span class="serif" style="font-size:16px;color:#2a4f9c">A</span>
                <i style="background:#d81e2a"></i>
              </span>`],
            [615, arr, 8],
            [636, html`<span class="serif shade">A</span>`],
            [662, html`<span class="circled">字</span>`],
          ])}
        </div>
      </div>`
    );
  }

  private paragraph() {
    return this.group(
      "g-para",
      "段落",
      true,
      html`<div class="tool-rows">
        <div class="tool-row">
          ${row(678, [
            [697, bullets()],
            [716, arr, 8],
            [736, bullets("#3a5aa0")],
            [754, arr, 8],
            [777, icons.multi],
            [788, arr, 6],
            [800, sep, 2],
            [818, icons.indentL],
            [844, icons.indentR],
            [860, sep, 2],
            [880, icons.asian],
            [893, arr, 8],
            [906, sep, 2],
            [923, icons.sort],
            [943, sep, 2],
            [962, icons.pilcrow],
          ])}
        </div>
        <div class="tool-row low">
          ${row(678, [
            [697, lines("left")],
            [724, lines("center")],
            [751, lines("right")],
            [777, html`<span class="hl">${lines("just")}</span>`, 27],
            [803, lines("just")],
            [820, sep, 2],
            [842, icons.lineSp],
            [856, arr, 6],
            [866, sep, 2],
            [884, icons.bucket],
            [901, arr, 8],
            [922, icons.border],
            [938, arr, 8],
          ])}
        </div>
      </div>`
    );
  }

  private stylesGroup() {
    return this.group(
      "g-style",
      "样式",
      true,
      html`<div class="style-body">
        <div class="gallery">
          ${this.styles_.map(
            (s) => html`<div class="sty ${s.cls}">
              <div class="pv ${s.k}">${s.pv}</div>
              <div class="nm">${s.nm}</div>
            </div>`
          )}
        </div>
        <div class="g-scroll"><i class="up" style="border-bottom-color:#ccc"></i>${arr}${arr}</div>
        <div class="change">${icons.change}<span>更改样式</span>${arr}</div>
      </div>`
    );
  }

  private editing() {
    return this.group(
      "g-edit",
      "编辑",
      false,
      html`<div class="edit-rows">
        <div class="edit-row"><span class="ico">${icons.find}</span>查找 ${arr}</div>
        <div class="edit-row"><span class="ico">${icons.replace}</span>替换</div>
        <div class="edit-row"><span class="ico">${icons.select}</span>选择 ${arr}</div>
      </div>`
    );
  }

  private saveGroup() {
    return this.group(
      "g-save",
      "保存",
      false,
      html`<div class="save-body">${icons.baidu}<span>保存到百<br />度网盘</span></div>`
    );
  }

  private cadTools() {
    const arrowIcon = (d: string) => html`<svg width="18" height="20" viewBox="0 0 18 20">
      <path d=${d} fill="#d9dcd8" stroke="#c6c9c5" />
    </svg>`;
    const rot = html`<svg width="18" height="18" viewBox="0 0 18 18">
      <path d="M4 14A7 7 0 1 1 14 14" fill="none" stroke="#b8b8b8" stroke-width="1.6" />
    </svg>`;
    return html`<div class="cad-tools">
      ${row(0, [
        [7, "5", 10],
        [41, "6mm", 40],
        [142, arr, 10],
        [167, html`<svg width="20" height="24" viewBox="0 0 20 24">
            <rect y="0" width="20" height="9" fill="#7fc96a" />
            <rect y="14" width="20" height="10" fill="#7fc96a" />
          </svg>`, 20],
        [199, html`<span style="font-size:15.500px">共边</span>`, 32],
        [237, html`<svg width="22" height="23" viewBox="0 0 22 23">
            <rect x=".75" y=".75" width="20.500" height="21.500" fill="#dbe8f4" stroke="#6fa0d0" stroke-width="1.500" />
            <path d="M7 4h8v7h3v6H4v-6h3z" fill="#4f9e3a" />
          </svg>`, 22],
        [274, html`<span style="font-size:15.500px">贴边</span>`, 34],
        [305, html`<span class="vsep"></span>`, 2],
        [324, arrowIcon("M9 1l7 9h-4v10H6V10H2z")],
        [356, arrowIcon("M1 10l8-7v4h8v6H9v4z")],
        [386, arrowIcon("M17 10l-8-7v4H1v6h8v4z")],
        [417, arrowIcon("M9 20l7-9h-4V1H6v10H2z")],
        [437, html`<span class="vsep"></span>`, 2],
        [455, rot],
        [498, html`<span class="off" style="font-size:16px">左旋(A)</span>`, 56],
        [547, rot],
        [591, html`<span class="off" style="font-size:16px">右旋(D)</span>`, 58],
        [664, html`<span class="strong" style="font-size:15.500px">旋转角度</span>`, 66],
        [723, "10°", 28],
      ])}
    </div>`;
  }

  private status() {
    return html`<div class="status">
      ${row(0, [
        [36, "页面: 1/1", 56],
        [75, sep, 1],
        [106, "字数: 0", 44],
        [138, sep, 1],
        [158, icons.check],
        [215, "英语(美国)", 61],
        [258, sep, 1],
        [282, "插入", 28],
        [306, sep, 1],
        [746, html`<span class="ibeam"></span>`, 9],
        [1223, html`<span class="view-on">${lines("just")}</span>`, 20],
        [1245, html`<svg width="13" height="14"><path d="M1 1h11v12H1zM6.500 1v12" fill="none" stroke="#7a7d82" /></svg>`, 14],
        [1263, html`<svg width="13" height="14"><path d="M1 1h11v12H1zM3 4h7M3 7h7" fill="none" stroke="#6c7c92" /></svg>`, 14],
        [1283, html`<svg width="12" height="12"><path d="M3 2h8M6 6h5M3 10h8" stroke="#8a8d92" /></svg>`, 14],
        [1305, html`<svg width="12" height="12"><path d="M1 2h10M1 5h10M1 8h10M1 11h10" stroke="#8a8d92" /></svg>`, 14],
        [1344, "100%", 36],
        [1380, html`<span class="zbtn">−</span>`, 14],
        [1445, html`<span class="zline"><b></b></span>`, 111],
        [1508, html`<span class="zbtn">+</span>`, 14],
      ])}
    </div>`;
  }

  render() {
    return html`
      <div class="window">
        ${this.titleBar()} ${this.tabBar()}
        <div class="ribbon">
          ${this.clipboard()} ${this.fontGroup()} ${this.paragraph()} ${this.stylesGroup()}
          ${this.editing()} ${this.saveGroup()}
        </div>
        <div class="doc">
          <div class="page">
            <div class="page-margin"></div>
            <div class="pic">
              <cad-figure></cad-figure>
              ${this.cadTools()}
              <i class="handle side"></i>
              <i class="handle round"></i>
              <i class="handle mid"></i>
            </div>
          </div>
          <div class="v-scroll">
            <i class="ruler"></i>
            <i class="up"></i>
            <i class="thumb"></i>
            <i class="down s-down"></i>
            <i class="up s-next"></i>
            <i class="dot s-next"></i>
            <i class="down s-next"></i>
          </div>
        </div>
        ${this.status()}
      </div>
      <div class="subtitle">首先看下我们的各个零件需要添加的数量</div>
    `;
  }
}
